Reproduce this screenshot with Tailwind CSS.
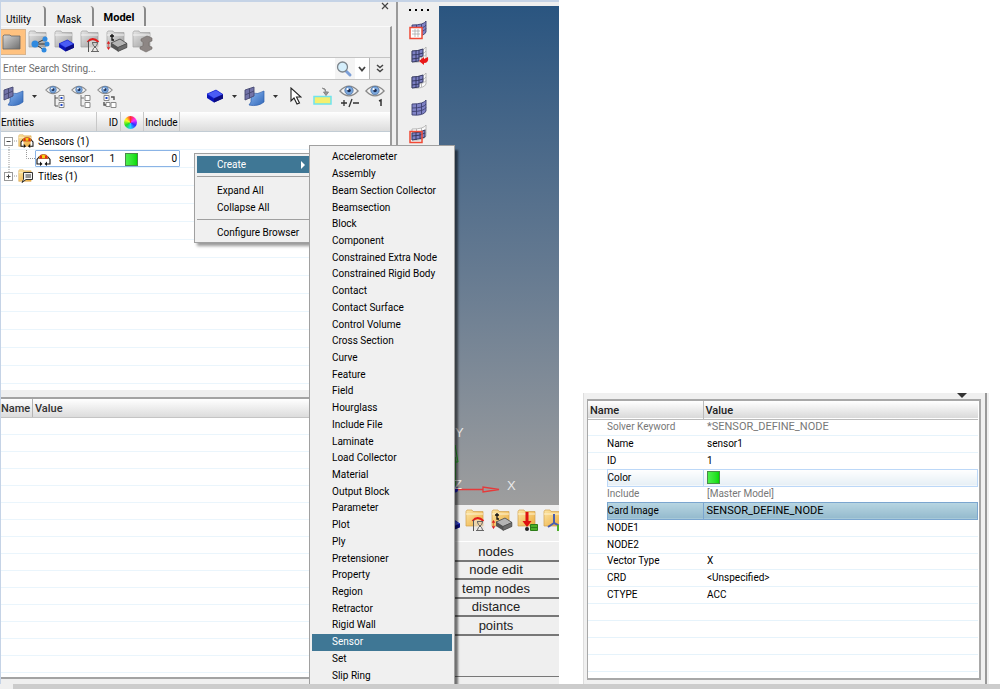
<!DOCTYPE html>
<html lang="en">
<head>
<meta charset="utf-8">
<meta name="viewport" content="width=device-width, initial-scale=1">
<title>Model Browser</title>
<script src="https://cdn.jsdelivr.net/npm/@tailwindcss/browser@4"></script>
</head>
<body class="bg-white text-black text-[10px] leading-4 font-['Roboto','Liberation_Sans',sans-serif]">

<!-- Shared icon shapes -->
<svg class="absolute w-0 h-0" aria-hidden="true">
  <defs>
    <linearGradient id="gGrey" x1="0" y1="0" x2="1" y2="1"><stop offset="0" stop-color="#d8d8d8"/><stop offset="1" stop-color="#6e6e6e"/></linearGradient>
    <linearGradient id="gLight" x1="0" y1="0" x2="1" y2="1"><stop offset="0" stop-color="#e6e6e6"/><stop offset="1" stop-color="#9c9c9c"/></linearGradient>
    <linearGradient id="gGold" x1="0" y1="0" x2="1" y2="1"><stop offset="0" stop-color="#fce6a6"/><stop offset="1" stop-color="#ecab3c"/></linearGradient>
    <linearGradient id="gBlue" x1="0" y1="0" x2="1" y2="1"><stop offset="0" stop-color="#8db9f2"/><stop offset="1" stop-color="#2f66b8"/></linearGradient>
    <symbol id="folderGrey" viewBox="0 0 22 22"><path d="M1 4V2.500L2 1h5l1 1.500h10V17H1z" fill="url(#gLight)" stroke="#a2a2a2" stroke-width=".7"/><path d="M1 5h17" stroke="#f4f4f4"/></symbol>
    <symbol id="folderGold" viewBox="0 0 22 22"><path d="M1 4V2.500L2 1h5l1 1.500h10V17H1z" fill="url(#gGold)" stroke="#d3a04c" stroke-width=".7"/><path d="M1 5h17" stroke="#fff3d0"/></symbol>
    <symbol id="cube" viewBox="0 0 18 14"><path d="M1 5l9-4 7 4.500v4L8 13.500 1 9z" fill="#0a14b8"/><path d="M1 5l9-4 7 4.500-9 4z" fill="#4a5cf5" stroke="#1522d0" stroke-width=".6"/><path d="M8 9.500l9-4v4l-9 4z" fill="#0d0d80"/></symbol>
    <symbol id="slab" viewBox="0 0 18 14"><path d="M1 5l9-4 7 4.500v4L8 13.500 1 9z" fill="#555"/><path d="M1 5l9-4 7 4.500-9 4z" fill="#b4b4b4" stroke="#444" stroke-width=".7"/><path d="M8 9.500l9-4v4l-9 4z" fill="#6c6c6c" stroke="#444" stroke-width=".5"/></symbol>
    <symbol id="prop" viewBox="0 0 14 15"><rect x="2.500" y="4" width="11" height="10.500" fill="#e8e4e0" opacity=".6"/><path d="M1.500 5q5-6 11 0" fill="none" stroke="#e21b1b" stroke-width="1.800"/><path d="M2.500 4v11" stroke="#555" stroke-width="1"/><path d="M5 14.500h8M6 5.500h6M6.500 6c0 4 5 4 5 8M11.500 6c0 4-5 4-5 8" fill="none" stroke="#666"/></symbol>
    <symbol id="thick" viewBox="0 0 5 10"><path d="M2.500 0l2 3h-4zM2.500 10l2-3h-4z" fill="#dc1c1c"/><path d="M2.500 3v4" stroke="#dc1c1c" stroke-dasharray="1 1"/></symbol>
    <symbol id="surf" viewBox="0 0 22 21"><path d="M7 7q7 2 13-2v11q-6 5-15 3l2-3z" fill="url(#gBlue)" stroke="#2d5fae" stroke-width=".7"/><path d="M1 4l9-3v9l-9 4z" fill="#7273a8" stroke="#45476f" stroke-width=".9"/><path d="M5.500 2.500v10M1 9l9-4" stroke="#45476f" stroke-width=".9"/></symbol>
    <symbol id="eye" viewBox="0 0 22 13"><path d="M1 6.500Q11-4 21 6.500 11 17 1 6.500z" fill="#f3f3f3" stroke="#8a8a8a" stroke-width="1.400"/><circle cx="11" cy="6" r="4.600" fill="#7aa7dc" stroke="#4e6f9e" stroke-width=".8"/><circle cx="11" cy="6" r="2" fill="#1e2f55"/><circle cx="9.500" cy="4.500" r="1.200" fill="#fff"/></symbol>
    <symbol id="mesh" viewBox="0 0 18 18"><path d="M1 5q12 0 14-4v11q-2 5-14 4z" fill="#fafafa" stroke="#aaa" stroke-width=".8"/><path d="M1 9q12 0 14-4M1 12.500q12 0 14-4M5.500 5v11M10.500 4v11" fill="none" stroke="#aaa" stroke-width=".8"/></symbol>
    <symbol id="meshBlue" viewBox="0 0 18 18"><path d="M1 5q12 0 14-4v11q-2 5-14 4z" fill="#8083c6" stroke="#3d4170" stroke-width=".9"/><path d="M1 9q12 0 14-4M1 12.500q12 0 14-4M5.500 5v11M10.500 4v11" fill="none" stroke="#3d4170" stroke-width=".9"/></symbol>
    <symbol id="sensor" viewBox="0 0 15 13"><path d="M3.500 3.500L1 6.500v4.500h3M11.500 3.500L14 6.500v4.500h-3" fill="#fff" stroke="#111" stroke-width="1.100"/><path d="M4 8.500L6.500 11 4 13zM11 8.500L8.500 11l2.500 2z" fill="#111"/><path d="M3 5.500Q3 1.500 7.500 1.500t4.500 4z" fill="#f7cf12" stroke="#a8330e" stroke-width=".7"/><path d="M4 2.500h2v3H4zM9 2.500h2v3H9z" fill="#e22a18"/></symbol>
  </defs>
</svg>

<div class="flex flex-col h-screen overflow-hidden relative">
  <main class="flex flex-1 min-h-0">

    <!-- Application window -->
    <section class="flex w-[559px] shrink-0 bg-[#efefef] border-t-2 border-[#c5d3e6]">

      <!-- Browser pane -->
      <div class="flex flex-col w-[392px] shrink-0 border-l border-[#c5d3e6]">
        <header class="flex h-6 shrink-0 items-end">
          <div role="tablist" class="flex items-end">
            <button role="tab" class="h-5 w-[45px] pr-2 pt-1.5 border-r-2 border-[#8a8a8a] rounded-tr-sm">Utility</button>
            <button role="tab" class="h-5 w-12 pt-1.5 border-r-2 border-[#8a8a8a] rounded-tr-sm">Mask</button>
            <button role="tab" aria-selected="true" class="h-5 w-[52px] pt-1 text-[11px] font-bold border-r-2 border-[#8a8a8a] rounded-tr-sm">Model</button>
          </div>
          <button aria-label="Close" class="ml-auto mr-[3px] self-start h-2 w-2"><svg viewBox="0 0 8 8" class="w-2 h-2"><path d="M1 1l6 6M7 1L1 7" stroke="#444" stroke-width="1.200"/></svg></button>
        </header>

        <div class="flex flex-col flex-1 min-h-0">
          <!-- View toolbar -->
          <div class="flex flex-col shrink-0 border-t border-[#fafafa] border-r-2 border-r-[#9a9a9a]">
            <div class="flex h-[30px] items-center">
              <button aria-label="Model view" class="w-[25px] h-[26px] bg-[#ffc280] border border-l-0 border-[#d9b48c] flex items-start pt-1 pl-px"><svg viewBox="0 0 20 16" class="w-5 h-4"><path d="M1 4V2l1-1h6l1 1h9v13H1z" fill="url(#gGrey)" stroke="#666" stroke-width=".8"/></svg></button>
              <button aria-label="Connectors" class="w-[26px] h-[26px] pl-0.5"><svg viewBox="0 0 24 24" class="w-6 h-6"><use href="#folderGrey" width="22" height="22"/><path d="M7 14l10-5M7 14l11 0M7 14l9 6" stroke="#333"/><circle cx="7" cy="14" r="3.500" fill="#2f8ae0"/><circle cx="17" cy="9" r="2.500" fill="#2f8ae0"/><circle cx="19" cy="14" r="2.500" fill="#2f8ae0"/><circle cx="16" cy="20" r="2.500" fill="#2f8ae0"/></svg></button>
              <button aria-label="Components" class="w-[26px] h-[26px] pl-0.5"><svg viewBox="0 0 24 24" class="w-6 h-6"><use href="#folderGrey" width="22" height="22"/><use href="#cube" x="4" y="9" width="17" height="13"/></svg></button>
              <button aria-label="Properties" class="w-[26px] h-[26px] pl-0.5"><svg viewBox="0 0 24 24" class="w-6 h-6"><use href="#folderGrey" width="22" height="22"/><use href="#prop" x="6" y="7" width="14" height="15"/></svg></button>
              <button aria-label="Thickness" class="w-[26px] h-[26px] pl-0.5"><svg viewBox="0 0 24 24" class="w-6 h-6"><use href="#folderGrey" width="22" height="22"/><path d="M6 4v6h2M4 6h4" fill="none" stroke="#111" stroke-width="1.300"/><use href="#thick" x="0" y="11" width="5" height="9"/><use href="#slab" x="4" y="8" width="18" height="14"/></svg></button>
              <button aria-label="Cross sections" class="w-[26px] h-[26px] pl-0.5"><svg viewBox="0 0 24 24" class="w-6 h-6"><use href="#folderGrey" width="22" height="22"/><path d="M9 9l6-3 5 2v3l-3 1v4l3 1v2l-6 3-6-3v-2l3-1v-4l-2-1z" fill="#8d8684" stroke="#6f6967" stroke-width=".6"/></svg></button>
            </div>
            <!-- Search -->
            <div class="flex h-[23px] border-y border-[#c4c4c4]">
              <label for="search" class="sr-only">Search</label>
              <input id="search" type="text" placeholder="Enter Search String..." class="flex-1 min-w-0 bg-white px-0.5 outline-none placeholder:text-[#6d6d6d]">
              <button aria-label="Search" class="w-5 bg-[#f4f4f4]"><svg viewBox="0 0 18 18" class="w-[18px] h-[18px]"><path d="M11 11l4 4" stroke="#7b9fd8" stroke-width="3" stroke-linecap="round"/><circle cx="7.500" cy="7" r="5" fill="#d5effc" stroke="#7d858c" stroke-width="1.300"/></svg></button>
              <button aria-label="Search options" class="w-[15px] bg-white border-r border-[#b5b5b5] flex items-center justify-center"><svg viewBox="0 0 8 6" class="w-2 h-1.5"><path d="M1 1l3 3.500L7 1" fill="none" stroke="#444" stroke-width="1.800"/></svg></button>
              <button aria-label="More" class="w-[20px] flex items-center justify-center"><svg viewBox="0 0 8 9" class="w-2 h-[9px]"><path d="M1 1l3 2.500L7 1M1 5l3 2.500L7 5" fill="none" stroke="#444" stroke-width="1.500"/></svg></button>
            </div>
            <!-- Display toolbar -->
            <div class="flex h-8 items-center">
              <button aria-label="Entity display" class="w-[44px] flex items-center gap-[7px] pl-0.5"><svg viewBox="0 0 22 21" class="w-[22px] h-[21px]"><use href="#surf"/></svg><svg viewBox="0 0 5 3" class="w-[5px] h-[3px]"><path d="M0 0h5L2.500 3z" fill="#333"/></svg></button>
              <button aria-label="Show all" class="w-[26px]"><svg viewBox="0 0 22 24" class="w-[22px] h-6"><use href="#eye" y="1" width="16" height="10"/><path d="M10 11v11h3M10 14h3" fill="none" stroke="#555"/><path d="M14 11.500h5v5h-5zM14 18.500h5v5h-5z" fill="#fff" stroke="#888"/><path d="M15.500 13h2v2h-2zM15.500 20h2v2h-2z" fill="#1a44c8"/></svg></button>
              <button aria-label="Hide all" class="w-[26px]"><svg viewBox="0 0 22 24" class="w-[22px] h-6"><use href="#eye" y="1" width="16" height="10"/><path d="M10 11v11h3M10 14h3" fill="none" stroke="#777"/><path d="M14 11.500h5v5h-5zM14 18.500h5v5h-5z" fill="#fff" stroke="#888"/></svg></button>
              <button aria-label="Reverse" class="w-[26px]"><svg viewBox="0 0 22 24" class="w-[22px] h-6"><use href="#eye" y="1" width="16" height="10"/><path d="M7 11.500h5v5H7zM14 18.500h5v5h-5zM9 18.500h4v4H9z" fill="#fff" stroke="#888"/><path d="M8.500 13h2v2h-2z" fill="#1a44c8"/><path d="M14 13h3v3M7 18v3h2" fill="none" stroke="#555" stroke-width="1.400"/></svg></button>
              <button aria-label="Components" class="ml-auto w-[38px] flex items-center gap-2"><svg viewBox="0 0 18 14" class="w-[18px] h-[14px]"><use href="#cube"/></svg><svg viewBox="0 0 5 3" class="w-[5px] h-[3px]"><path d="M0 0h5L2.500 3z" fill="#333"/></svg></button>
              <button aria-label="Geometry and mesh" class="w-[46px] flex items-center gap-[7px]"><svg viewBox="0 0 22 21" class="w-[22px] h-[21px]"><use href="#surf"/></svg><svg viewBox="0 0 5 3" class="w-[5px] h-[3px]"><path d="M0 0h5L2.500 3z" fill="#333"/></svg></button>
              <button aria-label="Select" class="w-[23px]"><svg viewBox="0 0 12 18" class="w-3 h-[18px]"><path d="M1 1v13l3-3 3 6 2.500-1-3-6H11z" fill="#fff" stroke="#222" stroke-width="1.100"/></svg></button>
              <button aria-label="Add to panel" class="w-[26px]"><svg viewBox="0 0 20 18" class="w-5 h-[18px]"><rect x="1" y="9.500" width="17" height="7.500" fill="#f5ef6e" stroke="#6fe4ee" stroke-width="1.500"/><path d="M9 1q4 0 4 4M10.500 5h5L13 8.500z" fill="#999" stroke="#888"/></svg></button>
              <button aria-label="Show hide" class="w-[26px]"><svg viewBox="0 0 22 24" class="w-[22px] h-6"><use href="#eye" y="1" width="20" height="12"/><path d="M2 19h6M5 16v6M13 15l-3 8M14 19h6" stroke="#333" stroke-width="1.300"/></svg></button>
              <button aria-label="Isolate" class="w-[25px]"><svg viewBox="0 0 22 24" class="w-[22px] h-6"><use href="#eye" y="1" width="20" height="12"/><path d="M14 17l2-1V22" fill="none" stroke="#333" stroke-width="1.500"/></svg></button>
            </div>
          </div>

          <!-- Entity tree -->
          <div class="flex flex-col h-[278px] shrink-0 border-r-2 border-[#9a9a9a]">
            <div class="grid grid-cols-[96px_24px_23px_36px_1fr] h-5 shrink-0 items-center bg-linear-to-b from-white to-[#dcdcdc] border-b border-[#c2ccd4]">
              <span class="border-r border-[#c8c8c8] h-full flex items-center pt-0.5">Entities</span>
              <span class="border-r border-[#c8c8c8] h-full flex items-center justify-end pr-0.5 pt-0.5">ID</span>
              <span class="border-r border-[#c8c8c8] h-full flex items-center justify-center pr-1 pt-0.5"><span class="w-[13px] h-[13px] rounded-full bg-[conic-gradient(#ff3030,#ff30ff,#3030ff,#20d0ff,#20e020,#ffff20,#ff3030)]"></span></span>
              <span class="border-r border-[#c8c8c8] h-full flex items-center justify-center pt-0.5">Include</span>
              <span></span>
            </div>
            <div role="tree" class="flex-1 bg-white bg-[repeating-linear-gradient(to_bottom,transparent_0_17px,#eaf5fc_17px_18px)]">
              <div role="treeitem" class="flex h-[18px] items-center">
                <svg viewBox="0 0 16 18" class="w-4 h-[18px]"><path d="M8 13v5M13 9h3" stroke="#999" stroke-dasharray="1 1"/><rect x="3.500" y="5.500" width="8" height="8" fill="#fff" stroke="#999"/><path d="M5.500 9.500h4" stroke="#444"/></svg>
                <svg viewBox="0 0 18 16" class="w-[18px] h-4"><use href="#folderGold" x="1" y="1" width="16" height="16"/><use href="#sensor" x="3" y="3" width="14" height="12"/></svg>
                <span class="pl-[3px] pt-px">Sensors (1)</span>
              </div>
              <div role="treeitem" class="flex h-[17px]">
                <svg viewBox="0 0 34 17" class="w-[34px] h-[17px]"><path d="M8 0v17M25.500 0v8.500H34" fill="none" stroke="#999" stroke-dasharray="1 1"/></svg>
                <div class="grid grid-cols-[19px_40px_24px_26px_1fr] items-center w-[145px] border border-[#8bb4e6] rounded-[1px] bg-white pr-0.5">
                  <svg viewBox="0 0 15 13" class="w-[15px] h-[13px]"><use href="#sensor"/></svg>
                  <span class="pl-1">sensor1</span>
                  <span class="text-right pr-1">1</span>
                  <span class="w-[13px] h-[13px] ml-1.5 bg-linear-to-r from-[#4cf04c] to-[#00dc00] border border-[#4a8a4a]"></span>
                  <span class="text-right">0</span>
                </div>
              </div>
              <div role="treeitem" class="flex h-[18px] items-center">
                <svg viewBox="0 0 16 18" class="w-4 h-[18px]"><path d="M8 0v5M13 9h3" stroke="#999" stroke-dasharray="1 1"/><rect x="3.500" y="5.500" width="8" height="8" fill="#fff" stroke="#999"/><path d="M5.500 9.500h4M7.500 7.500v4" stroke="#444"/></svg>
                <svg viewBox="0 0 18 16" class="w-[18px] h-4"><use href="#folderGold" x="1" y="1" width="16" height="16"/><path d="M6.500 4.500h9v7H9l-4 3 1.500-3z" fill="#f5f5f5" stroke="#333"/><path d="M8.500 7h5.500M8.500 9h5.500" stroke="#333"/></svg>
                <span class="pl-[3px] pt-px">Titles (1)</span>
              </div>
            </div>
          </div>

          <!-- Empty entity editor -->
          <div class="flex flex-col flex-1 min-h-0 mt-[7px] mb-[5px] mr-2 border-y-2 border-[#a3a3a3]">
            <div class="grid grid-cols-[32px_1fr] h-[19px] shrink-0 items-center bg-linear-to-b from-white to-[#dcdcdc] border-b border-[#c4c4c4] text-[11px] font-medium text-[#333]">
              <span class="border-r border-[#b5b5b5] pt-0.5">Name</span><span class="pl-0.5 pt-0.5">Value</span>
            </div>
            <div class="flex-1 bg-white bg-[repeating-linear-gradient(to_bottom,transparent_0_16px,#eaf5fc_16px_17px)]"></div>
          </div>
        </div>
      </div>

      <!-- Display toolbar, graphics area and panels -->
      <div class="flex flex-col flex-1 min-w-0">
        <div class="flex h-[503px] shrink-0 ml-1 border-l-2 border-[#9a9a9a]">
          <div class="w-[41px] flex flex-col items-center gap-2 pt-[7px]">
            <div class="flex gap-1 pb-px pl-px"><i class="size-0.5 bg-black"></i><i class="size-0.5 bg-black"></i><i class="size-0.5 bg-black"></i><i class="size-0.5 bg-black"></i></div>
            <button aria-label="Mask"><svg viewBox="0 0 20 20" class="w-5 h-5 block -mb-0.5"><use href="#meshBlue" x="2" y="0" width="18" height="18"/><rect x="1" y="7.500" width="12" height="11" fill="#fff" stroke="#f04a36" stroke-width="1.500"/><path d="M3 11h8M3 14h8M6 9v8M9 9v8" stroke="#aaa" stroke-width=".8"/></svg></button>
            <button aria-label="Reverse mask"><svg viewBox="0 0 20 20" class="w-5 h-5 block -mb-0.5"><use href="#mesh" x="2" y="0" width="18" height="18"/><path d="M3 5q6 0 11-2v7l-4 1v4l-7 1z" fill="#7d80c4" stroke="#363a63"/><path d="M3 9q6 0 11-2M3 13l7-1M7 5v10M10 4v7" fill="none" stroke="#363a63"/><path d="M10 15l5-4v2l4-2q1 6-4 6v2z" fill="#e81818"/></svg></button>
            <button aria-label="Mask not shown"><svg viewBox="0 0 20 20" class="w-5 h-5 block -mb-0.5"><use href="#mesh" x="2" y="0" width="18" height="18"/><path d="M3 5q6 0 11-2v7l-4 1v4l-7 1z" fill="#7d80c4" stroke="#363a63"/><path d="M3 9q6 0 11-2M3 13l7-1M7 5v10M10 4v7" fill="none" stroke="#363a63"/></svg></button>
            <button aria-label="Unmask all"><svg viewBox="0 0 20 20" class="w-5 h-5 block -mb-0.5"><use href="#meshBlue" x="2" y="1" width="18" height="18"/></svg></button>
            <button aria-label="Unmask shown"><svg viewBox="0 0 20 20" class="w-5 h-5 block -mb-0.5"><use href="#mesh" x="2" y="0" width="18" height="18"/><path d="M3 9q8 0 13-3v7q-5 2-13 3z" fill="#7d80c4" stroke="#363a63"/><path d="M3 12q8 0 13-3M7 9v7M11 8v7" fill="none" stroke="#363a63"/><rect x="1" y="7.500" width="12" height="11" fill="none" stroke="#f04a36" stroke-width="1.500"/></svg></button>
          </div>
          <div class="flex-1 mt-1 flex flex-col justify-end bg-linear-to-b from-[#2a5580] via-[#627890] to-[#9e9e9e]">
            <svg viewBox="0 0 80 84" class="w-20 h-[84px]" role="img" aria-label="Axis triad">
              <path d="M16 68V36" stroke="#1fa51f" stroke-width="1.500"/><path d="M16 24l-3 17h6z" fill="none" stroke="#1fb51f"/>
              <path d="M16 68.500h28M44 66v5l16-2.500z" fill="none" stroke="#e63a3a" stroke-width="1.300"/>
              <circle cx="16" cy="68.500" r="3" fill="#1a1ac4"/>
              <g fill="#e8e8e8" font-family="Liberation Sans" font-size="13"><text x="16" y="16">Y</text><text x="15" y="68">Z</text><text x="68" y="69">X</text></g>
            </svg>
          </div>
        </div>
        <!-- Collector toolbar -->
        <div class="flex h-9 shrink-0 items-center pl-[53px] pb-1 overflow-hidden">
          <svg viewBox="0 0 18 14" class="w-4 h-3 shrink-0 mr-1 mt-2"><use href="#cube"/></svg>
          <button aria-label="Properties" class="w-[26px] shrink-0"><svg viewBox="0 0 24 24" class="w-6 h-6"><use href="#folderGold" width="22" height="22"/><use href="#prop" x="6" y="7" width="14" height="15"/></svg></button>
          <button aria-label="Thickness" class="w-[26px] shrink-0"><svg viewBox="0 0 24 24" class="w-6 h-6"><use href="#folderGold" width="22" height="22"/><path d="M6 4v6h2M4 6h4" fill="none" stroke="#111" stroke-width="1.300"/><use href="#thick" x="0" y="11" width="5" height="9"/><use href="#slab" x="4" y="8" width="18" height="14"/></svg></button>
          <button aria-label="Load collectors" class="w-[26px] shrink-0"><svg viewBox="0 0 24 24" class="w-6 h-6"><use href="#folderGold" width="22" height="22"/><path d="M8.500 3h3v9h3L10 18l-4.500-6h3z" fill="#de1010"/><circle cx="10" cy="20" r="2" fill="#222"/><path d="M13.500 15.500h7v6h-7z" fill="#4caf28" stroke="#2d7d18"/><path d="M13.500 18.500h7" stroke="#2d7d18"/></svg></button>
          <button aria-label="System collectors" class="w-[26px] shrink-0"><svg viewBox="0 0 24 24" class="w-6 h-6"><use href="#folderGold" width="22" height="22"/><path d="M11 5v9l-6 4M11 14l6 3" fill="none" stroke="#4a5fae" stroke-width="2"/><path d="M14 16h7v6h-7z" fill="#4caf28"/></svg></button>
        </div>
        <!-- Panel menu -->
        <div class="flex flex-col flex-1 pl-[61px] mb-[7px] text-[13px] font-['Liberation_Sans',Arial,sans-serif] text-[#222] border-b border-[#777] border-t border-t-white">
          <button class="h-5 shrink-0 pt-0.5 pr-5 border-b-2 border-[#777]">nodes</button>
          <button class="h-[18px] shrink-0 pr-5 border-b-2 border-[#777]">node edit</button>
          <button class="h-[19px] shrink-0 pt-px pr-5 border-b-2 border-[#777]">temp nodes</button>
          <button class="h-[18px] shrink-0 pr-5 border-b-2 border-[#777]">distance</button>
          <button class="h-[19px] shrink-0 pt-px pr-5 border-b-2 border-[#777]">points</button>
        </div>
      </div>
    </section>

    <!-- Entity editor window -->
    <section class="flex flex-1 min-w-0 pt-[393px] pl-6 pr-[11px]">
      <div class="flex flex-col flex-1 min-w-0 bg-[#f0f0f0] border-l border-[#ddd] pl-[3px] pb-1">
        <div class="h-[6px] shrink-0 flex justify-end pr-[14px]"><svg viewBox="0 0 10 5" class="w-[10px] h-[5px]"><path d="M0 0h10L5 5z" fill="#333"/></svg></div>
        <div class="flex flex-col flex-1 min-h-0 bg-white border-t-2 border-l border-r-2 border-b-2 border-[#a8a8a8] pr-px">
          <table class="w-full table-fixed border-collapse text-left leading-[14px]">
            <colgroup><col class="w-[19px]"><col class="w-[96px]"><col></colgroup>
            <thead><tr class="h-[18px] bg-linear-to-b from-white to-[#d9d9d9] border-b border-[#bbb] text-[#222] text-[11px]">
              <th colspan="2" class="p-0 pl-0.5 pt-0.5 font-medium border-r border-[#bbb]">Name</th><th class="p-0 pl-0.5 pt-0.5 font-medium">Value</th></tr></thead>
            <tbody>
              <tr class="h-[16px] text-[#777] border-b border-[#e6f3fb]"><td class="p-0"></td><td class="p-0">Solver Keyword</td><td class="p-0 pl-1 text-[11px]">*SENSOR_DEFINE_NODE</td></tr>
              <tr class="h-[17px] border-b border-[#e6f3fb]"><td class="p-0"></td><td class="p-0">Name</td><td class="p-0 pl-1">sensor1</td></tr>
              <tr class="h-[17px] border-b border-[#e6f3fb]"><td class="p-0"></td><td class="p-0">ID</td><td class="p-0 pl-1">1</td></tr>
              <tr class="h-[17px]"><td class="p-0"></td><td class="p-0 bg-linear-to-b from-white to-[#e6eff5] border border-[#bcd8f8]">Color</td><td class="p-0 pl-[3px] bg-linear-to-b from-white to-[#e6eff5] border border-[#bcd8f8]"><span class="block w-[13px] h-[13px] bg-linear-to-r from-[#4cf04c] to-[#00dc00] border border-[#4a8a4a]"></span></td></tr>
              <tr class="h-[16px] text-[#777]"><td class="p-0"></td><td class="p-0">Include</td><td class="p-0 pl-1">[Master Model]</td></tr>
              <tr class="h-[17px]"><td class="p-0"></td><td class="p-0 bg-linear-to-b from-[#b8d6e2] to-[#94bacd] border border-[#7ba6cf]">Card Image</td><td class="p-0 pl-[3px] text-[11px] bg-linear-to-b from-[#b8d6e2] to-[#94bacd] border border-[#7ba6cf]">SENSOR_DEFINE_NODE</td></tr>
              <tr class="h-[17px] border-b border-[#e6f3fb]"><td class="p-0"></td><td class="p-0">NODE1</td><td class="p-0"></td></tr>
              <tr class="h-[17px] border-b border-[#e6f3fb]"><td class="p-0"></td><td class="p-0">NODE2</td><td class="p-0"></td></tr>
              <tr class="h-[16px] border-b border-[#e6f3fb]"><td class="p-0"></td><td class="p-0">Vector Type</td><td class="p-0 pl-1">X</td></tr>
              <tr class="h-[17px] border-b border-[#e6f3fb]"><td class="p-0"></td><td class="p-0">CRD</td><td class="p-0 pl-1">&lt;Unspecified&gt;</td></tr>
              <tr class="h-[17px] border-b border-[#e6f3fb]"><td class="p-0"></td><td class="p-0">CTYPE</td><td class="p-0 pl-1">ACC</td></tr>
            </tbody>
          </table>
          <div class="flex-1 bg-[repeating-linear-gradient(to_bottom,transparent_0_16px,#e6f3fb_16px_17px)]"></div>
        </div>
      </div>
      <div class="w-[8px] bg-[#f0f0f0] pl-1"><div class="h-full border-l-2 border-[#999]"></div></div>
    </section>
  </main>

  <!-- Horizontal scroll bar -->
  <footer class="h-[5px] shrink-0 bg-[#ccc] relative z-20"><div class="w-[13px] h-full bg-[#efefef]"></div></footer>

  <!-- Context menu -->
  <div role="menu" class="absolute left-[194px] top-[153px] w-[130px] h-[90px] p-0.5 flex flex-col bg-[#f0f0f0] border border-[#a0a0a0] shadow-[3px_3px_3px_#0006]">
    <button role="menuitem" class="h-[17px] shrink-0 pl-5 text-left bg-[#3f7795] text-white flex items-center">Create<svg viewBox="0 0 4 8" class="w-1 h-2 ml-auto mr-4"><path d="M0 0l4 4-4 4z" fill="#fff"/></svg></button>
    <hr class="mt-[3px] mb-[5px] border-t border-[#a0a0a0]">
    <button role="menuitem" class="h-[17px] shrink-0 pl-5 text-left">Expand All</button>
    <button role="menuitem" class="h-[17px] shrink-0 pl-5 text-left">Collapse All</button>
    <hr class="mt-[3px] mb-1 border-t border-[#a0a0a0]">
    <button role="menuitem" class="h-[17px] shrink-0 pl-5 text-left">Configure Browser</button>
  </div>

  <!-- Create submenu -->
  <div role="menu" class="absolute left-[309px] top-[145px] bottom-[5px] w-[146px] z-10 pt-[3px] px-0.5 flex flex-col bg-[#f0f0f0] border border-b-0 border-[#a0a0a0] shadow-[3px_5px_2px_#0008]">
    <button role="menuitem" class="flex-1 pl-5 text-left">Accelerometer</button>
    <button role="menuitem" class="flex-1 pl-5 text-left">Assembly</button>
    <button role="menuitem" class="flex-1 pl-5 text-left">Beam Section Collector</button>
    <button role="menuitem" class="flex-1 pl-5 text-left">Beamsection</button>
    <button role="menuitem" class="flex-1 pl-5 text-left">Block</button>
    <button role="menuitem" class="flex-1 pl-5 text-left">Component</button>
    <button role="menuitem" class="flex-1 pl-5 text-left">Constrained Extra Node</button>
    <button role="menuitem" class="flex-1 pl-5 text-left">Constrained Rigid Body</button>
    <button role="menuitem" class="flex-1 pl-5 text-left">Contact</button>
    <button role="menuitem" class="flex-1 pl-5 text-left">Contact Surface</button>
    <button role="menuitem" class="flex-1 pl-5 text-left">Control Volume</button>
    <button role="menuitem" class="flex-1 pl-5 text-left">Cross Section</button>
    <button role="menuitem" class="flex-1 pl-5 text-left">Curve</button>
    <button role="menuitem" class="flex-1 pl-5 text-left">Feature</button>
    <button role="menuitem" class="flex-1 pl-5 text-left">Field</button>
    <button role="menuitem" class="flex-1 pl-5 text-left">Hourglass</button>
    <button role="menuitem" class="flex-1 pl-5 text-left">Include File</button>
    <button role="menuitem" class="flex-1 pl-5 text-left">Laminate</button>
    <button role="menuitem" class="flex-1 pl-5 text-left">Load Collector</button>
    <button role="menuitem" class="flex-1 pl-5 text-left">Material</button>
    <button role="menuitem" class="flex-1 pl-5 text-left">Output Block</button>
    <button role="menuitem" class="flex-1 pl-5 text-left">Parameter</button>
    <button role="menuitem" class="flex-1 pl-5 text-left">Plot</button>
    <button role="menuitem" class="flex-1 pl-5 text-left">Ply</button>
    <button role="menuitem" class="flex-1 pl-5 text-left">Pretensioner</button>
    <button role="menuitem" class="flex-1 pl-5 text-left">Property</button>
    <button role="menuitem" class="flex-1 pl-5 text-left">Region</button>
    <button role="menuitem" class="flex-1 pl-5 text-left">Retractor</button>
    <button role="menuitem" class="flex-1 pl-5 text-left">Rigid Wall</button>
    <button role="menuitem" class="flex-1 pl-5 text-left bg-[#3f7795] text-white">Sensor</button>
    <button role="menuitem" class="flex-1 pl-5 text-left">Set</button>
    <button role="menuitem" class="flex-1 pl-5 text-left">Slip Ring</button>
  </div>
</div>
</body>
</html>
